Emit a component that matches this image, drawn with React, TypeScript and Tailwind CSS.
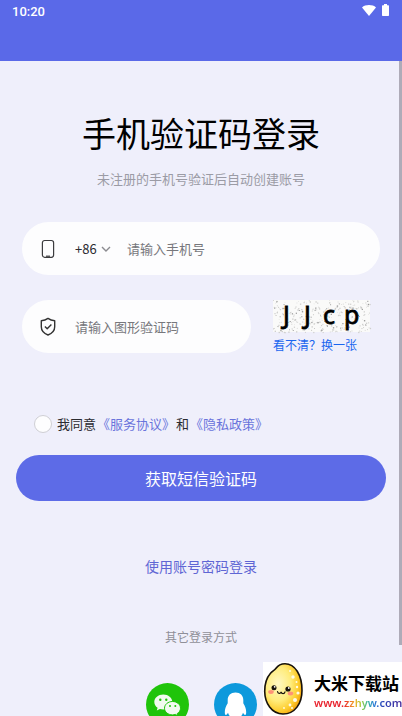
import React, { useState } from "react";

const SPECKS = Array.from({ length: 330 }, (_, i) => {
  const x = (i * 61.803) % 97;
  const y = (i * i * 0.731 + i * 7.13) % 32;
  return { x, y, size: 0.6 + ((i * 13) % 7) / 8, shade: i % 4 === 0 ? "#9a9a9a" : "#cfcfcd" };
});

function StatusBar() {
  return (
    <header className="flex h-[61px] shrink-0 items-start justify-between bg-[#5a69e8] px-3 pt-1 text-white">
      <span className="pt-px font-['Roboto','Liberation_Sans',sans-serif] text-[13px] leading-[14px] font-medium">10:20</span>
      <span className="flex items-center gap-1">
        <svg width="16" height="12" viewBox="0 0 16 12" fill="currentColor" aria-hidden="true">
          <path d="M8 12 1 3.4C2.8 1.8 5.2 1 8 1s5.200.8 7 2.400z" />
        </svg>
        <svg width="9" height="12" viewBox="0 0 9 12" fill="currentColor" aria-hidden="true">
          <path d="M3 0h3v1.300h1.300q.7 0 .7.7V11.300q0 .7-.7.7H1.700Q1 12 1 11.300V2q0-.7.7-.7H3z" />
        </svg>
      </span>
    </header>
  );
}

function Captcha() {
  return (
    <svg width="97" height="32" viewBox="0 0 97 32" role="img" aria-label="图形验证码" className="block overflow-visible">
      <rect width="97" height="32" fill="#fafaf9" />
      {SPECKS.map((s, i) => (
        <rect key={i} x={s.x} y={s.y} width={s.size} height={s.size} fill={s.shade} />
      ))}
      <g fill="#000" stroke="#000" strokeWidth="0.8" fontFamily="'Noto Sans', 'Open Sans', sans-serif" fontSize="25" fontWeight="400">
        <text x="10" y="24">J</text>
        <text x="31" y="24">J</text>
        <text x="50" y="24">c</text>
        <text x="71" y="24">p</text>
      </g>
    </svg>
  );
}

function PhoneIcon() {
  return (
    <svg width="14" height="20" viewBox="0 0 14 20" fill="none" stroke="#3c3c3f" strokeWidth="1.2" aria-hidden="true">
      <rect x="1.400" y="1.500" width="11.200" height="16.800" rx="2.200" />
      <path d="M5 17.200h4" />
    </svg>
  );
}

function ShieldIcon() {
  return (
    <svg width="16" height="20" viewBox="0 0 16 20" fill="none" stroke="#333" strokeWidth="1.400" strokeLinejoin="round" aria-hidden="true">
      <path d="M8 1.400C6 2.900 4 3.600 1.300 3.700v6.100c0 4 2.700 6.700 6.700 8.200 4-1.500 6.700-4.200 6.700-8.200V3.700C12 3.600 10 2.900 8 1.400z" />
      <path d="m4.900 9.500 2.300 2.300 4.200-4.300" />
    </svg>
  );
}

function WechatIcon() {
  return (
    <svg width="43" height="43" viewBox="0 0 43 43" aria-hidden="true">
      <circle cx="21.500" cy="21.500" r="21.500" fill="#1fc40a" />
      <path d="M17.300 11.500c-5 0-9 3.300-9 7.500 0 2.400 1.300 4.400 3.300 5.800l-.8 2.700 3.100-1.600c1.100.3 2.200.5 3.400.5 5 0 9-3.300 9-7.400s-4-7.500-9-7.500z" fill="#f2fbf0" />
      <path d="M26.500 18.500c-4.500 0-8 3-8 6.700s3.500 6.700 8 6.700c1 0 2-.2 2.900-.5l2.600 1.400-.7-2.300c2-1.200 3.200-3.100 3.200-5.300 0-3.700-3.500-6.700-8-6.700z" fill="#f2fbf0" stroke="#1fc40a" />
      <g fill="#1fc40a">
        <circle cx="14.300" cy="16.800" r="1.200" />
        <circle cx="20.300" cy="16.800" r="1.200" />
        <circle cx="24" cy="23" r="1" />
        <circle cx="29.300" cy="23" r="1" />
      </g>
    </svg>
  );
}

function QqIcon() {
  return (
    <svg width="43" height="43" viewBox="0 0 43 43" aria-hidden="true">
      <circle cx="21.500" cy="21.500" r="21.500" fill="#0d99dc" />
      <path d="M21.500 9.500c-4.800 0-7.800 3.200-7.800 7.400v3.300c-1.900 3-2.900 6.200-2.900 9 0 2 .5 2.800 1.100 2.700.7-.1 1.500-1 2.100-2.200.4 1.600 1.200 2.900 2.300 3.900-1.300.4-2.200 1.100-2.200 1.900 0 2.700 6 2.600 7.400 1 1.400 1.600 7.400 1.700 7.400-1 0-.8-.9-1.500-2.200-1.900 1.100-1 1.900-2.300 2.300-3.900.6 1.200 1.400 2.100 2.100 2.200.6.100 1.100-.7 1.100-2.700 0-2.800-1-6-2.900-9v-3.300c0-4.200-3-7.400-7.800-7.400z" fill="#fff" />
    </svg>
  );
}

function RiceMascot() {
  return (
    <svg width="42" height="54" viewBox="0 0 42 54" className="shrink-0" aria-hidden="true">
      <defs>
        <radialGradient id="grain" cx="0.36" cy="0.4" r="0.68">
          <stop offset="0" stopColor="#fff8c4" />
          <stop offset="0.5" stopColor="#ffec7c" />
          <stop offset="0.8" stopColor="#fdcc2d" />
          <stop offset="1" stopColor="#f2a10c" />
        </radialGradient>
      </defs>
      <path
        d="M22 1.700c-4 0-7 1.700-9 4.600C11.500 8.500 9.500 9 7.500 11.200 3.500 15.800 1.600 22 1.700 29.500 1.900 41 8.500 52 20 52c12 0 19-10.500 19-23.500C39 13 32 1.700 22 1.700z"
        fill="url(#grain)"
        stroke="#17120b"
        strokeWidth="1.600"
      />
      <g fill="#fffbe5">
        <circle cx="30" cy="15" r="1.700" />
        <circle cx="33.500" cy="20" r="1" />
        <circle cx="27" cy="9" r="1" />
        <circle cx="35" cy="31" r="1.600" />
        <circle cx="32" cy="38" r="2" />
        <circle cx="27" cy="43" r="1.400" />
        <circle cx="34" cy="25" r="1.200" />
        <circle cx="29" cy="46" r="1" />
        <circle cx="21" cy="46" r="0.900" />
      </g>
      <g fill="#ff9276">
        <ellipse cx="8" cy="30" rx="2.800" ry="1.900" />
        <ellipse cx="27.500" cy="31.500" rx="2.800" ry="1.900" />
      </g>
      <circle cx="11" cy="25.700" r="2.500" fill="#17120b" />
      <circle cx="25" cy="27" r="2.600" fill="#17120b" />
      <circle cx="11.700" cy="24.800" r="0.900" fill="#fff" />
      <circle cx="25.800" cy="26" r="0.900" fill="#fff" />
      <path d="M14.500 29.500c.3 2.400 3 2.600 3.600.3.500 2.500 3.400 2.400 3.900.1" fill="none" stroke="#17120b" strokeWidth="1.200" strokeLinecap="round" />
    </svg>
  );
}

function SiteBadge() {
  return (
    <aside className="absolute right-0 bottom-0 flex h-[54px] w-[139px] items-center bg-white">
      <RiceMascot />
      <div className="ml-[9px] pt-0.5 whitespace-nowrap">
        <p className="text-[17px] leading-[25px] font-bold text-black">大米下载站</p>
        <p className="bg-[linear-gradient(90deg,#e8202b_0%,#e8202b_34%,#f0672a_40%,#f0b429_47%,#9fce3c_54%,#38b7a0_61%,#2a7fd8_68%,#2b45b8_78%,#4a2f9d_100%)] bg-clip-text font-['Noto_Sans','Open_Sans',sans-serif] text-[11px] leading-4 font-semibold text-transparent">
          www.zzhyw.com
        </p>
      </div>
    </aside>
  );
}

export default function App() {
  const [agreed, setAgreed] = useState(false);
  return (
    <div className="relative flex h-screen flex-col overflow-hidden bg-[#efeffb] font-['Noto_Sans_CJK_SC',sans-serif] text-[13px] leading-5 text-[#2b2b30]">
      <StatusBar />
      <main className="flex shrink-0 flex-col pt-[47px]">
        <h1 className="text-center text-[34px] leading-[50px] text-black">手机验证码登录</h1>
        <p className="mt-[11px] text-center text-[#9b9ba5]">未注册的手机号验证后自动创建账号</p>

        <form className="mt-[33px] flex flex-col" onSubmit={(e) => e.preventDefault()}>
          <div className="mx-[22px] flex h-[53px] items-center rounded-full bg-[#fdfdfe] pr-6 pl-[19px]">
            <PhoneIcon />
            <div className="relative ml-5 flex items-center">
              <select aria-label="国家区号" className="w-9 appearance-none bg-transparent text-[13px] leading-5 outline-none">
                <option>+86</option>
              </select>
              <svg width="10" height="8" viewBox="0 0 10 8" fill="none" stroke="#8b8b90" strokeWidth="1.400" className="pointer-events-none absolute right-0" aria-hidden="true">
                <path d="m1 2 4 4 4-4" />
              </svg>
            </div>
            <input type="tel" aria-label="手机号" placeholder="请输入手机号" className="ml-4 min-w-0 flex-1 bg-transparent outline-none placeholder:text-[#77777c]" />
          </div>

          <div className="mx-[22px] mt-[25px] flex items-start gap-[22px]">
            <div className="flex h-[53px] min-w-0 flex-1 items-center rounded-full bg-[#fdfdfe] pr-6 pl-[18px]">
              <ShieldIcon />
              <input type="text" aria-label="图形验证码" placeholder="请输入图形验证码" className="ml-[19px] min-w-0 flex-1 bg-transparent outline-none placeholder:text-[#77777c]" />
            </div>
            <div className="w-[107px]">
              <Captcha />
              <button type="button" className="mt-1 block text-[12px] leading-[18px] whitespace-nowrap text-[#1a66ef]">
                看不清？换一张
              </button>
            </div>
          </div>

          <div className="mt-[60px] flex items-center pl-[34px]">
            <input
              id="agree"
              type="checkbox"
              checked={agreed}
              onChange={(e) => setAgreed(e.target.checked)}
              className="size-[18px] appearance-none rounded-full border border-[#cfcfd4] bg-[#fdfdfe] checked:bg-[#5d6be7]"
            />
            <div className="ml-[5px] flex items-center gap-px whitespace-nowrap">
              <label htmlFor="agree">我同意</label>
              <a href="#terms" className="text-[#6a74dc]">《服务协议》</a>
              <span>和</span>
              <a href="#privacy" className="text-[#6a74dc]">《隐私政策》</a>
            </div>
          </div>

          <button type="submit" className="mx-4 mt-[21px] h-[46px] rounded-full bg-[#5d6be7] text-[16px] text-white">
            获取短信验证码
          </button>
        </form>

        <a href="#password" className="mt-[55px] self-center text-[14px] text-[#5f66d4]">使用账号密码登录</a>
        <p className="mt-[51px] text-center text-[12px] text-[#8f8f98]">其它登录方式</p>
        <div className="mt-9 flex justify-center gap-[25px]">
          <button type="button" aria-label="微信登录"><WechatIcon /></button>
          <button type="button" aria-label="QQ登录"><QqIcon /></button>
        </div>
      </main>
      <div className="absolute top-[61px] right-0 h-[584px] w-[3px] bg-[#aeabb8]" aria-hidden="true" />
      <SiteBadge />
    </div>
  );
}
